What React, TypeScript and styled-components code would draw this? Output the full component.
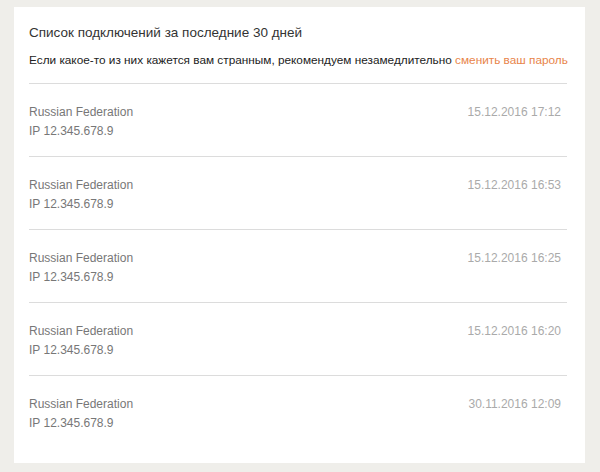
import React from "react";
import styled, { createGlobalStyle } from "styled-components";

const Global = createGlobalStyle`
  html, body { margin: 0; padding: 0; background: #efeeea; }
  body { font-family: "Liberation Sans", Arial, sans-serif; }
`;

const Page = styled.div`
  padding: 7px 15px 9px 14px;
`;

const Card = styled.section`
  background: #ffffff;
  width: 571px;
  height: 456px;
  box-sizing: border-box;
  padding: 18px 18px 0 15px;
`;

const Title = styled.h2`
  margin: 0;
  font-size: 13.5px;
  line-height: 16px;
  font-weight: normal;
  color: #333333;
`;

const Note = styled.p`
  margin: 11px 0 0;
  font-size: 11.8px;
  line-height: 16px;
  color: #222222;
  white-space: nowrap;
`;

const Link = styled.a`
  color: #e8844a;
  text-decoration: none;
`;

const List = styled.ul`
  list-style: none;
  margin: 15px 0 0;
  padding: 0;
`;

const Row = styled.li`
  display: flex;
  justify-content: space-between;
  align-items: flex-start;
  border-top: 1px solid #dcdcdc;
  padding: 19px 6px 15px 0;
`;

const Info = styled.div`
  display: flex;
  flex-direction: column;
  font-size: 12px;
  line-height: 19px;
  color: #777777;
`;

const DateText = styled.span`
  font-size: 12px;
  line-height: 19px;
  color: #aaaaaa;
`;

const sessions = [
  { country: "Russian Federation", ip: "IP 12.345.678.9", date: "15.12.2016 17:12" },
  { country: "Russian Federation", ip: "IP 12.345.678.9", date: "15.12.2016 16:53" },
  { country: "Russian Federation", ip: "IP 12.345.678.9", date: "15.12.2016 16:25" },
  { country: "Russian Federation", ip: "IP 12.345.678.9", date: "15.12.2016 16:20" },
  { country: "Russian Federation", ip: "IP 12.345.678.9", date: "30.11.2016 12:09" },
];

export default function App() {
  return (
    <>
      <Global />
      <Page>
        <Card>
          <Title>Список подключений за последние 30 дней</Title>
          <Note>
            Если какое-то из них кажется вам странным, рекомендуем незамедлительно{" "}
            <Link href="#">сменить ваш пароль</Link>
          </Note>
          <List>
            {sessions.map((s, i) => (
              <Row key={i}>
                <Info>
                  <span>{s.country}</span>
                  <span>{s.ip}</span>
                </Info>
                <DateText>{s.date}</DateText>
              </Row>
            ))}
          </List>
        </Card>
      </Page>
    </>
  );
}
